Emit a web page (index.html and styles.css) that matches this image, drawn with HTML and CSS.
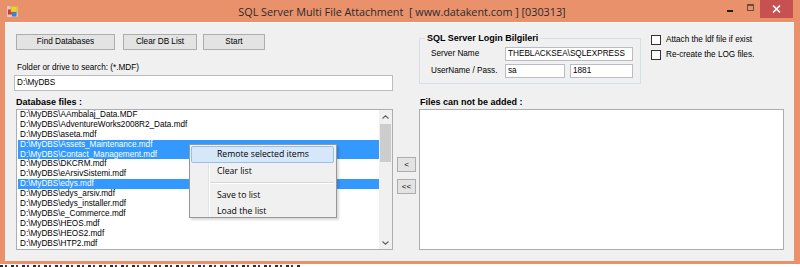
FILE: index.html
```html
<!DOCTYPE html>
<html>
<head>
<meta charset="utf-8">
<link rel="stylesheet" href="styles.css">
</head>
<body>
<div class="window">
  <div class="titlebar">
    <div class="tb-left">
      <svg class="app-icon" width="11" height="11" viewBox="0 0 11 11">
        <rect x="0" y="0" width="11" height="11" fill="#d9c9c0"/>
        <rect x="1" y="3.5" width="5" height="5" fill="#d8343a"/>
        <rect x="4" y="0.5" width="6" height="5.5" fill="#f2d22a" stroke="#c9a814" stroke-width="0.6"/>
        <rect x="5" y="6" width="4.5" height="4.5" fill="#3b82d6"/>
      </svg>
    </div>
    <div class="title">SQL Server Multi File Attachment&nbsp; [ www.datakent.com ] [030313]</div>
    <div class="tb-right">
      <span class="cb-min"></span>
      <span class="cb-max"></span>
      <span class="cb-close">
        <svg width="9" height="8" viewBox="0 0 9 8"><path d="M1 0.5 L8 7.5 M8 0.5 L1 7.5" stroke="#fff" stroke-width="1.6"/></svg>
      </span>
    </div>
  </div>

  <div class="client">
    <div class="col-left">
      <div class="btn-row">
        <button class="btn btn-find">Find Databases</button>
        <button class="btn btn-clear">Clear DB List</button>
        <button class="btn btn-start">Start</button>
      </div>
      <div class="lbl lbl-folder">Folder or drive to search: (*.MDF)</div>
      <div class="textbox tb-folder">D:\MyDBS</div>
      <div class="lbl-bold lbl-db">Database files :</div>
      <div class="listbox list-db">
        <div class="items">
          <div class="item">D:\MyDBS\AAmbalaj_Data.MDF</div>
          <div class="item">D:\MyDBS\AdventureWorks2008R2_Data.mdf</div>
          <div class="item">D:\MyDBS\aseta.mdf</div>
          <div class="item sel">D:\MyDBS\Assets_Maintenance.mdf</div>
          <div class="item sel">D:\MyDBS\Contact_Management.mdf</div>
          <div class="item">D:\MyDBS\DKCRM.mdf</div>
          <div class="item">D:\MyDBS\eArsivSistemi.mdf</div>
          <div class="item sel">D:\MyDBS\edys.mdf</div>
          <div class="item">D:\MyDBS\edys_arsiv.mdf</div>
          <div class="item">D:\MyDBS\edys_installer.mdf</div>
          <div class="item">D:\MyDBS\e_Commerce.mdf</div>
          <div class="item">D:\MyDBS\HEOS.mdf</div>
          <div class="item">D:\MyDBS\HEOS2.mdf</div>
          <div class="item">D:\MyDBS\HTP2.mdf</div>
        </div>
        <div class="vscroll">
          <div class="arrow">
            <svg width="7" height="4" viewBox="0 0 7 4"><path d="M0.5 3.5 L3.5 0.8 L6.5 3.5" fill="none" stroke="#606060" stroke-width="1.1"/></svg>
          </div>
          <div class="track"><div class="thumb"></div></div>
          <div class="arrow">
            <svg width="7" height="4" viewBox="0 0 7 4"><path d="M0.5 0.5 L3.5 3.2 L6.5 0.5" fill="none" stroke="#606060" stroke-width="1.1"/></svg>
          </div>
        </div>
        <div class="ctxmenu">
          <div class="mi hot">Remote selected items</div>
          <div class="mi">Clear list</div>
          <div class="msep"></div>
          <div class="mi short">Save to list</div>
          <div class="mi short">Load the list</div>
        </div>
      </div>
    </div>

    <div class="col-mid">
      <button class="btn btn-small">&lt;</button>
      <button class="btn btn-small">&lt;&lt;</button>
    </div>

    <div class="col-right">
      <div class="top-row">
        <fieldset class="group">
          <legend>SQL Server Login Bilgileri</legend>
          <div class="group-grid">
            <div class="lbl">Server Name</div>
            <div class="textbox tb-server">THEBLACKSEA\SQLEXPRESS</div>
            <div class="lbl">UserName / Pass.</div>
            <div class="pair">
              <div class="textbox tb-user">sa</div>
              <div class="textbox tb-pass">1881</div>
            </div>
          </div>
        </fieldset>
        <div class="checks">
          <div class="check"><span class="cbox"></span><span class="lbl">Attach the ldf file if exist</span></div>
          <div class="check"><span class="cbox"></span><span class="lbl">Re-create the LOG files.</span></div>
        </div>
      </div>
      <div class="lbl-bold lbl-files">Files can not be added :</div>
      <div class="listbox list-files"></div>
    </div>
  </div>
</div>
<div class="desk"></div>
</body>
</html>
```

FILE: styles.css
```css
* { box-sizing: border-box; }

html, body {
  margin: 0;
  padding: 0;
  background: #ffffff;
  overflow: hidden;
}

body {
  width: 800px;
  height: 267px;
  font-family: "Liberation Sans", Arial, sans-serif;
  font-size: 8.2px;
  color: #000;
}

.window {
  width: 800px;
  height: 264px;
  background: #e9916b;
  display: flex;
  flex-direction: column;
}

/* ---------- title bar ---------- */
.titlebar {
  height: 22px;
  flex: none;
  display: grid;
  grid-template-columns: 1fr auto 1fr;
  align-items: start;
}

.tb-left {
  padding: 6px 0 0 7px;
}

.app-icon { display: block; }

.title {
  font-family: "Open Sans", "Noto Sans", sans-serif;
  font-size: 10.8px;
  line-height: 14px;
  padding-top: 5px;
  padding-left: 4px;
  color: #2b2b2b;
  white-space: nowrap;
}

.tb-right {
  justify-self: end;
  display: flex;
  align-items: flex-start;
  padding-right: 7px;
}

.cb-min {
  width: 6px;
  height: 2px;
  margin-top: 10px;
  background: #1e1e1e;
}

.cb-max {
  width: 7px;
  height: 7px;
  margin-top: 4px;
  margin-left: 14px;
  border: 1px solid #6e4a38;
  border-top-width: 2px;
}

.cb-close {
  width: 33px;
  height: 18px;
  margin-left: 6px;
  background: #c75050;
  display: flex;
  align-items: center;
  justify-content: center;
}

.cb-close svg { display: block; }

/* ---------- client ---------- */
.client {
  height: 239px;
  margin: 0 6px 0 5px;
  background: #f0f0f0;
  border-top: 1px solid #fbfbfb;
  display: flex;
  padding-left: 11px;
}

.col-left {
  width: 377px;
  display: flex;
  flex-direction: column;
}

.btn-row {
  display: flex;
  margin-top: 11px;
}

.btn {
  font-family: "Liberation Sans", Arial, sans-serif;
  font-size: 8.2px;
  color: #000;
  background: #e3e3e3;
  border: 1px solid #adadad;
  border-radius: 0;
  padding: 0;
  height: 16px;
  line-height: 14px;
  text-align: center;
}

.btn-find { width: 99px; }
.btn-clear { width: 74px; margin-left: 8px; }
.btn-start { width: 62px; margin-left: 6px; }

.lbl {
  line-height: 10px;
  white-space: nowrap;
}

.lbl-folder {
  margin-top: 13px;
  padding-left: 1px;
}

.textbox {
  background: #fff;
  border: 1px solid #b9bcc2;
  padding-left: 2px;
  white-space: nowrap;
  overflow: hidden;
}

.tb-folder {
  margin-top: 2px;
  margin-left: -2px;
  width: 379px;
  height: 16px;
  line-height: 14px;
}

.lbl-bold {
  font-weight: bold;
  font-size: 9px;
  line-height: 10px;
  white-space: nowrap;
}

.lbl-db {
  margin-top: 6px;
}

.listbox {
  position: relative;
  background: #fff;
  border: 1px solid #abadb3;
}

.list-db {
  margin-top: 2px;
  height: 141px;
  display: flex;
}

.items {
  flex: 1;
  padding: 0 0 0 1px;
}

.item {
  height: 9.9px;
  line-height: 9.9px;
  padding-left: 2px;
  white-space: nowrap;
}

.item.sel {
  background: #3399ff;
  color: #fff;
}

.vscroll {
  width: 13px;
  display: flex;
  flex-direction: column;
  background: #f0f0f0;
}

.arrow {
  height: 13px;
  display: flex;
  align-items: center;
  justify-content: center;
}

.arrow svg { display: block; }

.track {
  flex: 1;
  padding: 1px 1px 0;
}

.thumb {
  height: 38px;
  background: #cdcdcd;
}

/* ---------- context menu ---------- */
.ctxmenu {
  position: absolute;
  left: 172px;
  top: 34px;
  width: 148px;
  height: 74px;
  background: #f0f0f0;
  border: 1px solid #979797;
  padding: 1px 2px 1px 1px;
  font-family: "Open Sans", "Noto Sans", sans-serif;
  font-size: 8.7px;
  box-shadow: 2px 2px 2px rgba(0, 0, 0, 0.15);
  background-image: linear-gradient(to right, #f0f0f0 0, #f0f0f0 18px, #e2e3e3 18px, #e2e3e3 19px, #ffffff 19px, #ffffff 20px, #f0f0f0 20px);
}

.mi {
  height: 17px;
  line-height: 15px;
  padding-left: 25px;
  border: 1px solid transparent;
  white-space: nowrap;
}

.mi.short {
  height: 16px;
  line-height: 14px;
}

.mi.hot {
  background: #d5e7f8;
  border-color: #8ec2f0;
  border-radius: 2px;
}

.msep {
  height: 5px;
  margin-left: 19px;
}

.msep::before {
  content: "";
  display: block;
  margin-top: 2px;
  height: 1px;
  background: #d7d7d7;
  border-bottom: 1px solid #ffffff;
  box-sizing: content-box;
}

/* ---------- middle column ---------- */
.col-mid {
  width: 19px;
  margin-left: 4px;
  padding-top: 134px;
  display: flex;
  flex-direction: column;
  gap: 7px;
}

.btn-small {
  width: 19px;
  height: 15px;
  line-height: 13px;
  font-size: 8px;
}

/* ---------- right column ---------- */
.col-right {
  width: 365px;
  margin-left: 3px;
  display: flex;
  flex-direction: column;
}

.top-row {
  display: flex;
  margin-top: 10px;
}

.group {
  width: 222px;
  margin: 0;
  padding: 4px 6px 5px 0;
  border: 1px solid #d5dfe5;
  min-width: 0;
}

.group legend {
  font-weight: bold;
  font-size: 9px;
  line-height: 10px;
  padding: 0 2px;
  margin-left: 5px;
}

.group-grid {
  display: grid;
  grid-template-columns: 74px 128px;
  row-gap: 3px;
  align-items: center;
  padding-left: 11px;
}

.group-grid .textbox {
  height: 14px;
  line-height: 12px;
}

.pair {
  display: flex;
  gap: 5px;
}

.tb-user { width: 60px; }
.tb-pass { width: 63px; }

.checks {
  margin-left: 10px;
  padding-top: 2px;
  display: flex;
  flex-direction: column;
}

.check {
  height: 15px;
  display: flex;
  align-items: flex-start;
}

.cbox {
  width: 10px;
  height: 10px;
  background: #fff;
  border: 1px solid #333;
  flex: none;
}

.check .lbl {
  margin-left: 5px;
}

.lbl-files {
  margin-top: 13px;
  padding-left: 1px;
}

.list-files {
  margin-top: 2px;
  height: 141px;
}

/* ---------- desktop strip below ---------- */
.desk {
  height: 3px;
  background-color: #ffffff;
  background-image:
    repeating-linear-gradient(to right, #3a2624 0, #3a2624 3px, transparent 3px, transparent 5px, #6b2a22 5px, #6b2a22 7px, transparent 7px, transparent 11px);
  background-size: 300px 2px;
  background-repeat: no-repeat;
  background-position: 0 1px;
}
```
